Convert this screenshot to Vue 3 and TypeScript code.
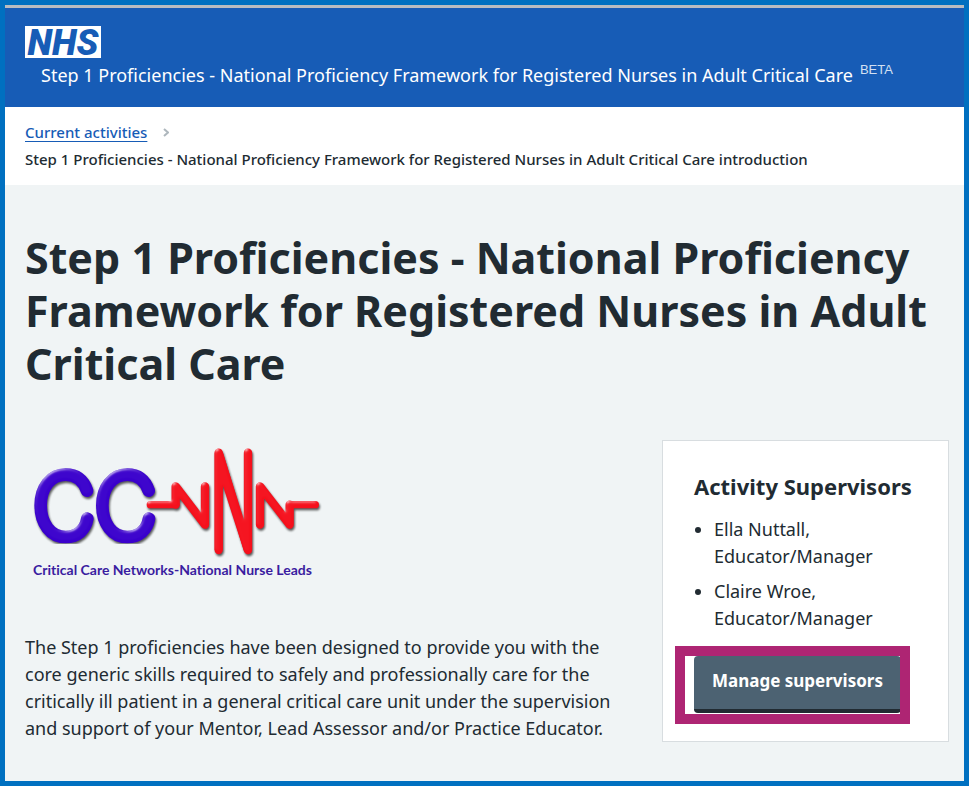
<script setup lang="ts">
interface Supervisor {
  name: string
  role: string
}

const title = 'Step 1 Proficiencies - National Proficiency Framework for Registered Nurses in Adult Critical Care'

const supervisors: Supervisor[] = [
  { name: 'Ella Nuttall', role: 'Educator/Manager' },
  { name: 'Claire Wroe', role: 'Educator/Manager' },
]
</script>

<template>
  <div class="page">
    <header class="header">
      <a class="nhs" href="#">NHS</a>
      <div class="service">
        <span>{{ title }}</span>
        <sup class="beta">BETA</sup>
      </div>
    </header>

    <nav class="breadcrumb">
      <div class="crumb">
        <a href="#">Current activities</a>
        <svg class="chevron" viewBox="0 0 6 9" aria-hidden="true">
          <path d="M1 1 L5 4.5 L1 8" />
        </svg>
      </div>
      <div class="crumb">{{ title }} introduction</div>
    </nav>

    <main class="main">
      <h1>{{ title }}</h1>

      <div class="columns">
        <div class="intro">
          <figure class="logo">
            <svg viewBox="15 30 900 360" aria-hidden="true">
              <defs>
                <filter id="bevel" x="-10%" y="-10%" width="120%" height="120%" color-interpolation-filters="sRGB">
                  <feGaussianBlur in="SourceAlpha" stdDeviation="5" result="soft" />
                  <feSpecularLighting in="soft" surfaceScale="4" specularConstant="0.6" specularExponent="16" lighting-color="#ffffff" result="light">
                    <feDistantLight azimuth="240" elevation="20" />
                  </feSpecularLighting>
                  <feComposite in="light" in2="SourceAlpha" operator="in" result="gloss" />
                  <feOffset in="SourceAlpha" dx="4" dy="5" result="moved" />
                  <feGaussianBlur in="moved" stdDeviation="3" result="shade" />
                  <feComponentTransfer in="shade" result="shadow">
                    <feFuncA type="linear" slope="0.65" />
                  </feComponentTransfer>
                  <feMerge>
                    <feMergeNode in="shadow" />
                    <feMergeNode in="SourceGraphic" />
                    <feMergeNode in="gloss" />
                  </feMerge>
                </filter>
              </defs>
              <g class="rings" filter="url(#bevel)">
                <path d="M201 182 C190 150 168 134 137 134 C92 134 62 173 62 226 C62 281 92 321 137 321 C172 321 196 300 202 266" />
                <path d="M386 182 C375 150 353 134 322 134 C277 134 247 173 247 226 C247 281 277 321 322 321 C357 321 381 300 387 266" />
              </g>
              <g class="pulse" filter="url(#bevel)">
                <path class="thin" d="M391 224 H467" />
                <path class="mid" d="M467 224 V169 L555 284 V169" />
                <path class="mid" d="M596 360 V68 L684 360 V68" />
                <path class="wedge" d="M584 68 L596 56 L608 66 L672 270 V68 H684 L695 360 L684 372 L672 364 L608 165 V360 H584 Z" />
                <path class="mid" d="M720 284 V169 L809 284 V224" />
                <path class="thin" d="M809 224 H886" />
              </g>
            </svg>
            <figcaption>Critical Care Networks-National Nurse Leads</figcaption>
          </figure>
          <p>
            The Step 1 proficiencies have been designed to provide you with the
            core generic skills required to safely and professionally care for the
            critically ill patient in a general critical care unit under the supervision
            and support of your Mentor, Lead Assessor and/or Practice Educator.
          </p>
        </div>

        <aside class="card">
          <h2>Activity Supervisors</h2>
          <ul>
            <li v-for="person in supervisors" :key="person.name">
              {{ person.name }},<br />{{ person.role }}
            </li>
          </ul>
          <div class="action">
            <button type="button">Manage supervisors</button>
            <span class="highlight" aria-hidden="true"></span>
          </div>
        </aside>
      </div>
    </main>
  </div>
</template>

<style>
body {
  margin: 0;
}
</style>

<style scoped>
.page {
  box-sizing: border-box;
  min-height: 100vh;
  display: flex;
  flex-direction: column;
  border: 5px solid #0070c0;
  background: #f0f4f5;
  color: #212b32;
  font-family: "Noto Sans", "Open Sans", sans-serif;
}

.header {
  padding: 18px 20px 19px;
  border-top: 3px solid #b8bcc0;
  background: #175cb6;
  color: #fff;
}

.nhs {
  display: block;
  width: 76px;
  height: 32px;
  background: #fff;
  color: #175cb6;
  font: italic 900 36px/34px Roboto, sans-serif;
  text-align: center;
  text-decoration: none;
}

.service {
  display: flex;
  align-items: flex-start;
  gap: 7px;
  padding-left: 16px;
  margin-top: 4px;
  font-size: 18px;
  line-height: 26px;
}

.beta {
  color: #d3e0f2;
  font: 13px/16px "Liberation Sans", sans-serif;
}

.breadcrumb {
  padding: 12px 20px 12px;
  background: #fff;
  font-size: 15px;
  font-weight: 500;
  line-height: 27px;
}

.crumb {
  display: flex;
  align-items: center;
  gap: 16px;
}

.crumb a {
  color: #175cb6;
  text-underline-offset: 3px;
}

.chevron {
  width: 6px;
  height: 9px;
  fill: none;
  stroke: #aeb7bd;
  stroke-width: 2;
}

.main {
  flex: 1;
  padding: 46px 15px 36px 20px;
}

h1 {
  margin: 0;
  font-size: 43px;
  font-weight: 700;
  line-height: 53px;
}

.columns {
  display: grid;
  grid-template-columns: minmax(0, 1fr) 287px;
  align-items: start;
  gap: 32px;
  margin-top: 50px;
}

.logo {
  width: 300px;
  margin: 0;
}

.logo svg {
  display: block;
  width: 100%;
  fill: none;
  stroke-linecap: round;
  stroke-linejoin: round;
}

.rings {
  stroke: #3a00cc;
  stroke-width: 38;
}

.pulse {
  stroke: #f5101c;
}

.thin {
  stroke-width: 22;
}

.mid {
  stroke-width: 25;
}

.wedge {
  fill: #f5101c;
  stroke: none;
}

figcaption {
  padding-left: 8px;
  color: #3a1ca0;
  font-family: Lato, sans-serif;
  font-size: 14px;
  font-weight: 700;
  font-variant-ligatures: none;
  line-height: 20px;
  white-space: nowrap;
}

.intro p {
  margin: 54px 0 0;
  font-size: 18px;
  line-height: 27px;
}

.card {
  box-sizing: border-box;
  padding: 30px 31px 28px;
  border: 1px solid #d8dde0;
  background: #fff;
}

h2 {
  margin: 0 0 15px;
  font-size: 22px;
  font-weight: 700;
  line-height: 30px;
}

ul {
  display: flex;
  flex-direction: column;
  gap: 8px;
  margin: 0 0 24px;
  padding-left: 20px;
  font-size: 18px;
  line-height: 27px;
}

.action {
  position: relative;
  width: max-content;
}

button {
  display: block;
  height: 57px;
  padding: 0 18px 4px;
  border: 0;
  border-bottom: 4px solid #212b32;
  border-radius: 4px;
  background: #4c6272;
  color: #fff;
  font: 700 17px/27px "Noto Sans", "Open Sans", sans-serif;
}

.highlight {
  position: absolute;
  inset: -10px -9px -11px -19px;
  border: 10px solid #ae2573;
  pointer-events: none;
}
</style>
